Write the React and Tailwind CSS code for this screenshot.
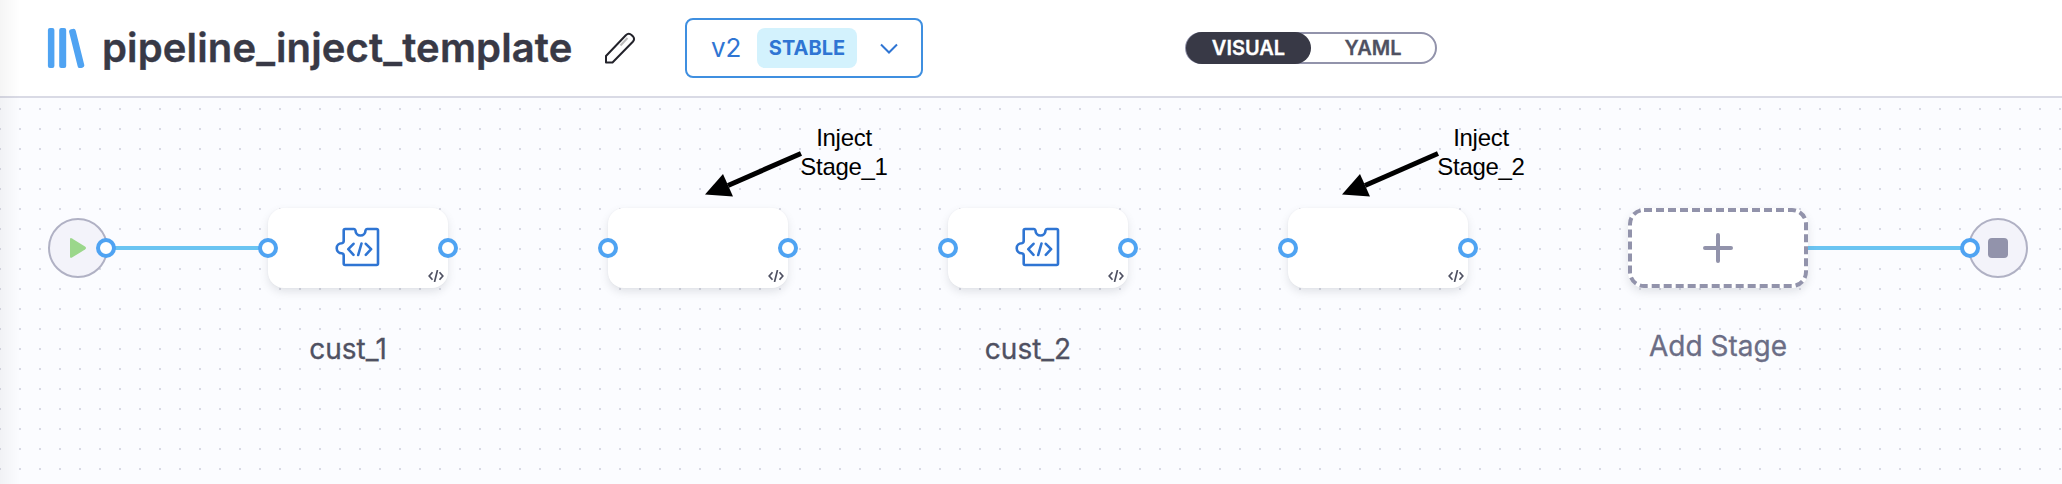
function Port({ side }) {
  return (
    <span
      className={`absolute top-1/2 size-5 -translate-y-1/2 rounded-full border-4 border-[#4fa3f2] bg-white ${side}`}
    />
  );
}

function PuzzleIcon() {
  return (
    <svg
      width="46"
      height="42"
      viewBox="0 0 46 42"
      fill="none"
      stroke="#2f75d3"
      strokeWidth="2.6"
      strokeLinecap="round"
      strokeLinejoin="round"
    >
      <path d="M8.7 3.5q0-1.5 1.5-1.5h8.800c1 0 1.300.6 1.500 1.500a5 5 0 0 0 10 0c.2-.9.5-1.500 1.500-1.500h9.500q1.500 0 1.500 1.500v33q0 1.500-1.500 1.500h-31.300q-1.500 0-1.500-1.500v-8c0-1.400-.6-2-2-2.200a5 5 0 0 1 0-10c1.400-.3 2-.9 2-2.300z" />
      <path d="M18.500 16.800l-5.200 5.400 5.200 5.600M26.500 16.500l-3.300 11.500M30.800 16.800l5.300 5.400-5.300 5.600" />
    </svg>
  );
}

function CodeIcon() {
  return (
    <svg
      className="absolute right-1 bottom-1.5"
      width="16"
      height="12"
      viewBox="0 0 16 12"
      fill="none"
      stroke="#4f5162"
      strokeWidth="1.7"
    >
      <path d="M4.500 2.300L1.200 6l3.300 3.700M9.500 0L6.500 12M11.500 2.300L14.800 6l-3.300 3.700" />
    </svg>
  );
}

function Stage({ name, icon, children }) {
  return (
    <div className="relative flex h-20 w-[180px] shrink-0 items-center justify-center rounded-2xl bg-white shadow-[0_4px_8px_rgba(96,97,112,0.16),0_0_2px_rgba(40,41,61,0.04)]">
      {icon && <PuzzleIcon />}
      <CodeIcon />
      <Port side="-left-2.5" />
      <Port side="-right-2.5" />
      {name && (
        <span className="absolute top-[125px] left-0 w-[160px] text-center text-[28px] leading-8 text-[#4f5162] [-webkit-text-stroke:0.3px]">
          {name}
        </span>
      )}
      {children}
    </div>
  );
}

function Callout({ label, place }) {
  return (
    <div className={`absolute -top-[86px] h-[80px] w-[190px] text-black ${place}`}>
      <svg className="absolute top-0 left-0" width="110" height="80" viewBox="0 0 110 80">
        <path d="M28 63.500L101 31.500" stroke="#000" strokeWidth="5" />
        <path d="M5 72.500L23 52l10 22.500z" fill="#000" />
      </svg>
      <div className="absolute top-[1px] left-[81px] w-[126px] text-center font-['Liberation_Sans',sans-serif] text-[24px] leading-[29px] tracking-[-0.3px]">
        Inject
        <br />
        {label}
      </div>
    </div>
  );
}

function Header() {
  return (
    <header className="flex h-[98px] items-center border-b-2 border-[#d9dae5] bg-white">
      <svg className="ml-[47px] shrink-0" width="38" height="40" viewBox="0 0 38 40" fill="#4fa3f2">
        <rect x="0.900" width="6.500" height="40" rx="2" />
        <rect x="12.200" width="7" height="40" rx="2" />
        <rect x="26.300" y="0.500" width="6.800" height="40" rx="2.500" transform="rotate(-14 29.700 20.500)" />
      </svg>
      <h1 className="ml-[17px] w-[485px] text-[40px] leading-none font-semibold tracking-[0.14px] whitespace-nowrap text-[#383946] [-webkit-text-stroke:0.4px]">
        pipeline_inject_template
      </h1>
      <svg
        className="ml-[17px] shrink-0"
        width="32"
        height="32"
        viewBox="0 0 32 32"
        fill="none"
        stroke="#22222a"
        strokeWidth="2"
        strokeLinejoin="round"
      >
        <path d="M2 24L21.800 3.200q3-2.800 6 0l1 1q2.500 2.800 0 5.500L8.500 30.500H2z" />
        <path d="M16.500 13.500l7-7.500" stroke="#bbb" />
      </svg>
      <button className="ml-[49px] flex h-[60px] w-[238px] shrink-0 items-center rounded-lg border-2 border-[#3f8fe0] pl-[24px] text-[#2f75d3]">
        <span className="w-[46px] text-left text-[26px] leading-none">v2</span>
        <span className="flex h-10 w-[100px] items-center justify-center rounded-lg bg-[#d3f2fd] text-[20px] font-bold">
          STABLE
        </span>
        <svg className="ml-[23px]" width="18" height="11" viewBox="0 0 18 11" fill="none" stroke="currentColor" strokeWidth="2">
          <path d="M1 1.500l8 8 8-8" />
        </svg>
      </button>
      <div className="ml-[262px] flex h-8 w-[252px] shrink-0 items-stretch rounded-full border-2 border-[#9293ab] text-[20px] font-semibold">
        <span className="-my-0.5 -ml-px flex w-[125px] items-center justify-center rounded-full bg-[#383946] text-white [-webkit-text-stroke:0.3px]">
          VISUAL
        </span>
        <span className="flex flex-1 items-center justify-center text-[#4f5162] [-webkit-text-stroke:0.3px]">YAML</span>
      </div>
    </header>
  );
}

export default function App() {
  return (
    <div className="relative flex h-[484px] w-[2062px] flex-col overflow-hidden font-['Inter',sans-serif]">
      <Header />
      <main className="flex-1 bg-[#fbfcff] bg-[conic-gradient(from_270deg_at_2px_2px,#d9dae5_90deg,transparent_0)] bg-[length:20px_20px] bg-[position:-1px_10px] pt-[110px] pl-12">
        <div className="flex items-center">
          <div className="relative flex size-[60px] shrink-0 items-center justify-center rounded-full border-2 border-[#b0b1c4] bg-[#f3f3fa]">
            <svg width="16" height="20" viewBox="0 0 16 20" fill="#9bd78b">
              <path d="M0 1.500Q0-.5 2 .4L15 8.600q2 1.400 0 2.800L2 19.600q-2 .9-2-1.100z" />
            </svg>
            <Port side="-right-2.5" />
          </div>
          <div className="h-1 w-[160px] shrink-0 bg-[#6ac4f2]" />
          <div className="flex gap-[160px]">
            <Stage name="cust_1" icon />
            <Stage>
              <Callout label="Stage_1" place="left-[92px]" />
            </Stage>
            <Stage name="cust_2" icon />
            <Stage>
              <Callout label="Stage_2" place="left-[49px]" />
            </Stage>
            <div className="relative flex h-20 w-[180px] items-center justify-center rounded-2xl bg-white shadow-[0_4px_8px_rgba(96,97,112,0.16)]">
              <svg className="absolute inset-0" width="180" height="80" fill="none" stroke="#9293ab" strokeWidth="4">
                <rect x="2" y="2" width="176" height="76" rx="14" strokeDasharray="8 4" />
              </svg>
              <svg width="30" height="30" viewBox="0 0 30 30" stroke="#9293ab" strokeWidth="4" strokeLinecap="round">
                <path d="M2 15h26M15 2v26" />
              </svg>
              <span className="absolute top-[122px] left-0 w-full text-center text-[28px] leading-8 text-[#6b6d85] [-webkit-text-stroke:0.3px]">
                Add Stage
              </span>
            </div>
          </div>
          <div className="h-1 w-[160px] shrink-0 bg-[#6ac4f2]" />
          <div className="relative flex size-[60px] shrink-0 items-center justify-center rounded-full border-2 border-[#b0b1c4] bg-[#f3f3fa]">
            <div className="size-5 rounded-sm bg-[#9293ab]" />
            <Port side="-left-2.5" />
          </div>
        </div>
      </main>
      <div className="pointer-events-none absolute inset-y-0 left-0 w-5 bg-linear-to-r from-black/4 to-transparent" />
    </div>
  );
}
